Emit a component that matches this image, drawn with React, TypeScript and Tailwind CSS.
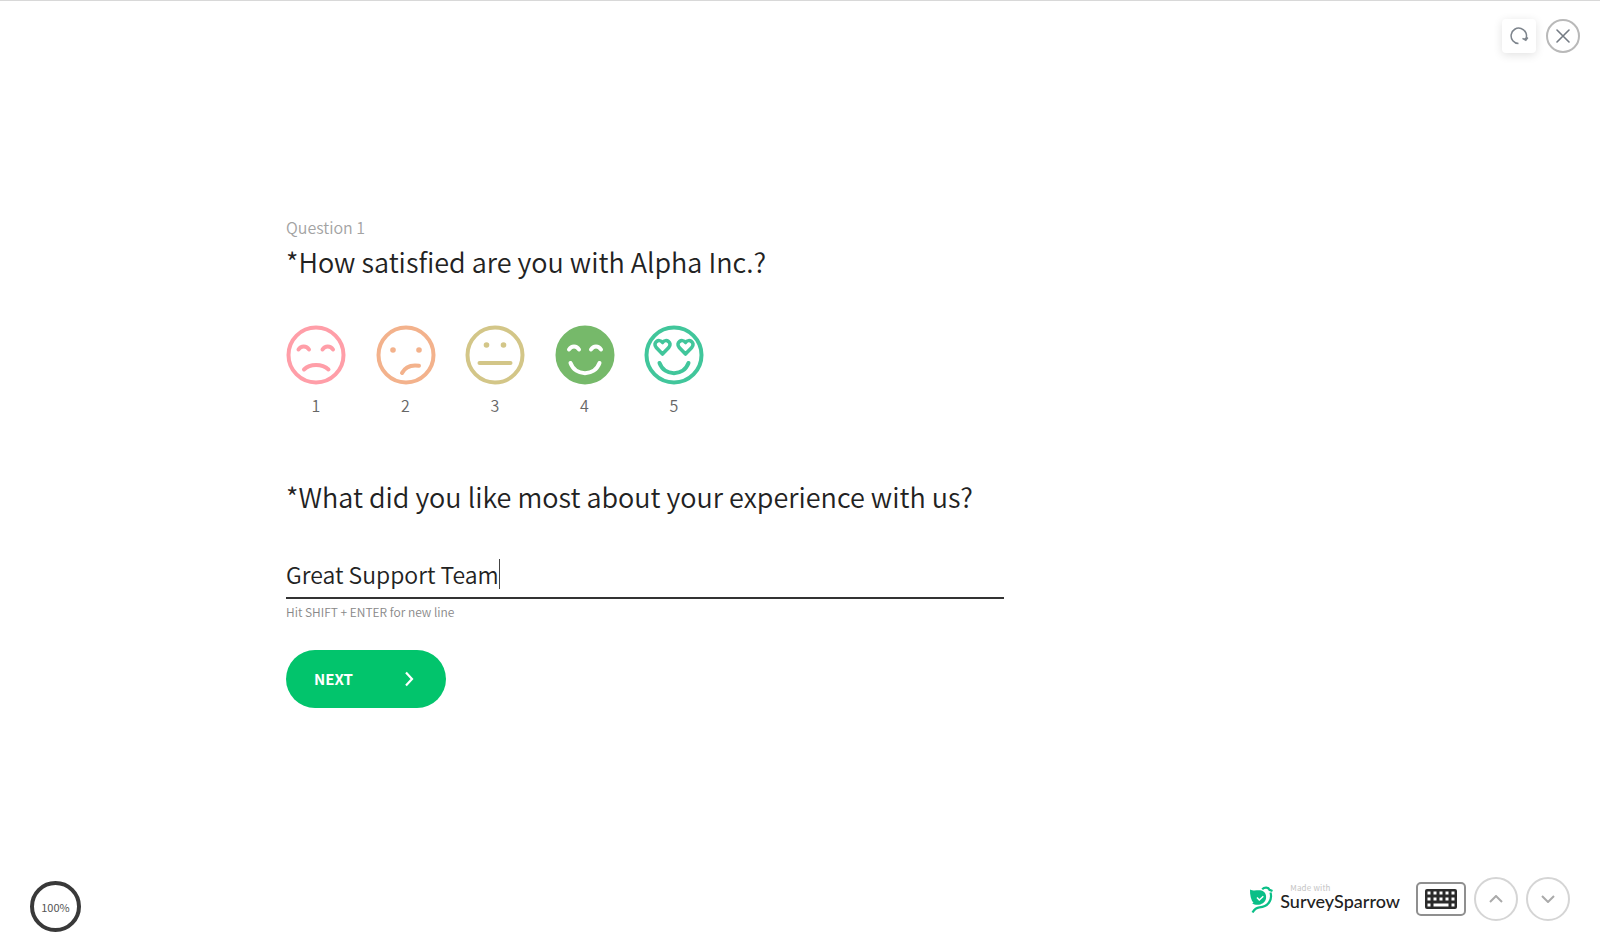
import React, { useState } from 'react';

interface Face {
  value: number;
  color: string;
  art: React.ReactNode;
}

const faces: Face[] = [
  {
    value: 1,
    color: 'text-[#ff9ea8]',
    art: (
      <>
        <path d="M12.5 24.5c2.5-4 8-4 10.5 0M36.5 24.5c2.5-4 8-4 10.5 0" />
        <path d="M18 44.5c6-6 18-6 24.5 0" />
      </>
    ),
  },
  {
    value: 2,
    color: 'text-[#f3b28c]',
    art: (
      <>
        <circle cx="17" cy="25" r="2.8" fill="currentColor" stroke="none" />
        <circle cx="43" cy="25" r="2.8" fill="currentColor" stroke="none" />
        <path d="M26 48c3-6 9-8.5 17-7.3" />
      </>
    ),
  },
  {
    value: 3,
    color: 'text-[#d3c688]',
    art: (
      <>
        <circle cx="21.5" cy="20" r="2.8" fill="currentColor" stroke="none" />
        <circle cx="38.5" cy="20" r="2.8" fill="currentColor" stroke="none" />
        <path d="M14.5 38h31" />
      </>
    ),
  },
  {
    value: 4,
    color: 'text-[#76b96a]',
    art: (
      <>
        <path d="M14 24.5c2.5-4 7.5-4 10 0M36 24.5c2.5-4 7.5-4 10 0" />
        <path d="M15.5 38c5 13.5 24 13.5 29 0" />
      </>
    ),
  },
  {
    value: 5,
    color: 'text-[#41c69b]',
    art: (
      <>
        <path d="M18.5 29l-6.3-6.5c-4-5 2.8-9.5 6.3-5 3.5-4.5 10.3 0 6.3 5z" strokeWidth="3.6" />
        <path d="M41.5 29l-6.3-6.5c-4-5 2.8-9.5 6.3-5 3.5-4.5 10.3 0 6.3 5z" strokeWidth="3.6" />
        <path d="M15.5 38c5 13.5 24 13.5 29 0" />
      </>
    ),
  },
];

const keyColumns = [2, 8, 14, 20, 26];

const Header: React.FC = () => (
  <header className="flex justify-end gap-2.5 border-t border-[#d8d8d8] px-5 pt-[18px]">
    <button
      aria-label="Restart"
      className="flex size-[34px] items-center justify-center rounded bg-white text-[#7d848c] shadow-[0_2px_10px_rgba(0,0,0,0.12)]"
    >
      <svg viewBox="0 0 20 20" className="size-5" fill="none" stroke="currentColor" strokeWidth="1.5">
        <path d="M9.5 17.500A7.700 7.700 0 1 1 16.800 13" />
        <path d="M13.500 12.300l3.300 2 2-2.800M16.800 14.300l-.8-2.300" />
      </svg>
    </button>
    <button
      aria-label="Close"
      className="flex size-[34px] items-center justify-center rounded-full border-2 border-[#b9b9b9] text-[#747b84]"
    >
      <svg viewBox="0 0 14 14" className="size-3.5" fill="none" stroke="currentColor" strokeWidth="1.6" strokeLinecap="round">
        <path d="M1 1l12 12M13 1L1 13" />
      </svg>
    </button>
  </header>
);

const Footer: React.FC = () => (
  <footer className="flex items-center justify-between px-[30px] pb-[13px]">
    <div className="flex size-[51px] items-center justify-center rounded-full border-4 border-[#393939] pt-0.5 text-[11px] text-[#555]">
      100%
    </div>
    <div className="flex items-center gap-2 pb-3.5">
      <a href="#" className="mr-2 flex items-end gap-[7px] text-[#222]">
        <svg viewBox="0 0 24 28" className="h-7 w-6" fill="none">
          <path
            d="M1 3.5C5 5.5 8 3.7 12.5 4.5c3.5 1 5.2 4.5 4.5 8-.8 4-4.5 6.3-8.5 6.3-2 0-4-.3-5.5-1.3l1.5-.5C2 14 .8 9 1 3.5z"
            fill="#0abf87"
          />
          <path d="M8 11.5l2.3 2.5 4-3.7" stroke="#fff" strokeWidth="1.5" />
          <path
            d="M13.2 3.2C15.5.8 19.5 1 20.5 3.8l3 1.2M21.5 6.5c2.3 8-3 14.5-11 14.8-3 .2-5 1.7-7 5.2"
            stroke="#0abf87"
            strokeWidth="2.2"
          />
        </svg>
        <span className="flex flex-col pb-1">
          <span className="pl-2.5 text-[8px] leading-[8px] tracking-wide text-[#c4c4c4]">Made with</span>
          <span className="font-[Lato,sans-serif] text-[18px] leading-[18px] font-medium">SurveySparrow</span>
        </span>
      </a>
      <button
        aria-label="Keyboard shortcuts"
        className="flex h-[34px] w-[50px] items-center justify-center rounded-[5px] border-2 border-[#8f8f8f]"
      >
        <svg viewBox="0 0 32 20" className="h-5 w-8">
          <rect width="32" height="20" rx="2" fill="#2b2b2b" />
          <g fill="#fff">
            {keyColumns.map((x) => (
              <React.Fragment key={x}>
                <rect x={x + 0.5} y="2.5" width="3" height="3" />
                <rect x={x + 0.5} y="8.5" width="3" height="3" />
              </React.Fragment>
            ))}
            <rect x="2.5" y="14.5" width="3" height="3" />
            <rect x="8.5" y="14.5" width="15" height="3" />
            <rect x="26.5" y="14.5" width="3" height="3" />
          </g>
        </svg>
      </button>
      <button
        aria-label="Previous"
        className="flex size-11 items-center justify-center rounded-full border-2 border-[#d5d5d5] text-[#aaa]"
      >
        <svg viewBox="0 0 14 8" className="h-2 w-3.5" fill="none" stroke="currentColor" strokeWidth="2">
          <path d="M1 7l6-6 6 6" />
        </svg>
      </button>
      <button
        aria-label="Next"
        className="flex size-11 items-center justify-center rounded-full border-2 border-[#d5d5d5] text-[#aaa]"
      >
        <svg viewBox="0 0 14 8" className="h-2 w-3.5" fill="none" stroke="currentColor" strokeWidth="2">
          <path d="M1 1l6 6 6-6" />
        </svg>
      </button>
    </div>
  </footer>
);

const App: React.FC = () => {
  const [rating, setRating] = useState(4);
  const [answer, setAnswer] = useState('Great Support Team');

  return (
    <div className="flex min-h-screen flex-col bg-white font-['Noto_Sans_CJK_SC',sans-serif] text-[#222]">
      <Header />
      <main className="flex-1 px-[286px] pt-[162px]">
        <form className="max-w-[718px]" onSubmit={(e) => e.preventDefault()}>
          <p className="text-[16px] leading-6 font-[350] text-[#a3a3a3]">Question 1</p>
          <fieldset>
            <legend className="pt-[3px] text-[27px] leading-10 font-[350]">*How satisfied are you with Alpha Inc.?</legend>
            <div className="mt-[43px] flex w-[418px] justify-between">
              {faces.map(({ value, color, art }) => (
                <label key={value} className="flex cursor-pointer flex-col items-center">
                  <input
                    type="radio"
                    name="rating"
                    className="sr-only"
                    checked={rating === value}
                    onChange={() => setRating(value)}
                  />
                  <svg
                    viewBox="0 0 60 60"
                    className={`size-15 ${color}`}
                    fill="none"
                    strokeWidth="4"
                    strokeLinecap="round"
                    strokeLinejoin="round"
                  >
                    <circle cx="30" cy="30" r="27.5" stroke="currentColor" fill={rating === value ? 'currentColor' : 'none'} />
                    <g stroke={rating === value ? '#fff' : 'currentColor'}>{art}</g>
                  </svg>
                  <span className="mt-2 text-[16px] leading-6 font-[350] text-[#666]">{value}</span>
                </label>
              ))}
            </div>
          </fieldset>
          <label htmlFor="answer" className="mt-[60px] block text-[27px] leading-10 font-[350]">
            *What did you like most about your experience with us?
          </label>
          <div className="mt-[42px] flex items-center border-b-2 border-[#333] pb-2">
            <input
              id="answer"
              className="field-sizing-content h-[30px] text-[23px] leading-[30px] font-[350] caret-transparent outline-none"
              value={answer}
              onChange={(e) => setAnswer(e.target.value)}
            />
            <span className="h-[30px] w-px bg-[#444]" />
          </div>
          <p className="mt-[3px] text-[12px] leading-5 font-[350] text-[#888]">Hit SHIFT + ENTER for new line</p>
          <button className="mt-7 flex h-[58px] w-40 items-center justify-between rounded-full bg-[#02c46c] pr-8 pl-7 text-[15px] font-bold text-white">
            NEXT
            <svg viewBox="0 0 10 16" className="h-4 w-2.5" fill="none" stroke="currentColor" strokeWidth="2.2">
              <path d="M2 1.5l6 6.5-6 6.5" />
            </svg>
          </button>
        </form>
      </main>
      <Footer />
    </div>
  );
};

export default App;
